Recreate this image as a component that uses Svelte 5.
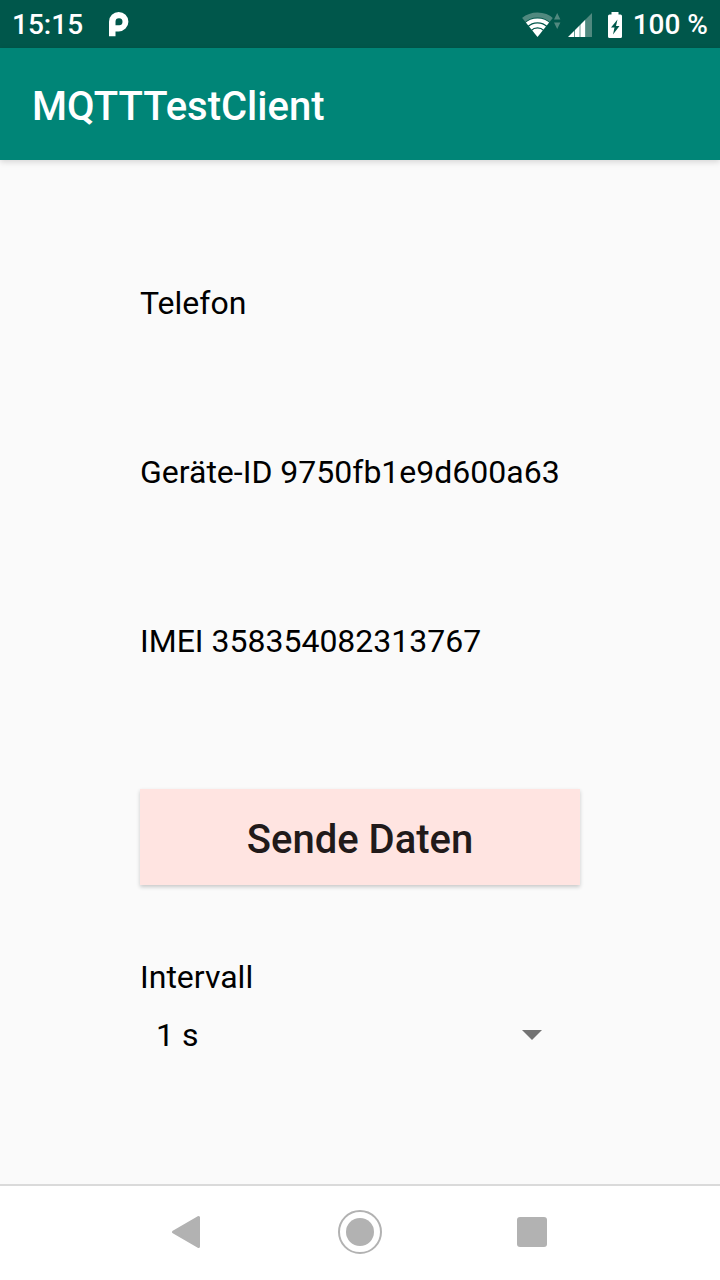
<script>
  const appName = 'MQTTTestClient';

  const infos = [
    { label: 'Telefon', value: '' },
    { label: 'Geräte-ID', value: '9750fb1e9d600a63' },
    { label: 'IMEI', value: '358354082313767' }
  ];

  const intervals = [1, 2, 5, 10, 30, 60];

  let interval = $state(1);
  let sent = $state(0);

  function sendData() {
    sent += 1;
  }
</script>

<div class="screen">
  <div class="statusbar">
    <span class="time">15:15</span>
    <svg class="parking" width="20" height="26" viewBox="0 0 20 26" aria-hidden="true">
      <path fill="#fff" fill-rule="evenodd" d="M0 24.300V9.700A9.700 9.700 0 0 1 9.700 0a9.700 9.700 0 0 1 0 19.400H6.500v4.900zM6.500 13.200h3.200a3.500 3.500 0 1 0-3.200-3.500z" />
    </svg>

    <div class="system">
      <svg width="40" height="26" viewBox="0 0 40 26" aria-hidden="true">
        <clipPath id="cone"><path d="M15.500 25L-1 4.500V-2h33v6.500z" /></clipPath>
        <g clip-path="url(#cone)" fill="none">
          <circle cx="15.500" cy="25" r="22" stroke="#50897f" stroke-width="5" />
          <circle cx="15.500" cy="25" r="16.700" stroke="#fff" stroke-width="3.800" />
          <circle cx="15.500" cy="25" r="11.600" stroke="#fff" stroke-width="3.800" />
          <circle cx="15.500" cy="25" r="4.200" stroke="#fff" stroke-width="8.400" />
        </g>
        <path fill="#50897f" d="M32 7.500L35.200 1l3.200 6.500zM32 10.500h6.400L35.200 17z" />
      </svg>
      <svg class="signal" width="24" height="26" viewBox="0 0 24 26" aria-hidden="true">
        <path fill="#50897f" d="M18 7l6-6v24h-6z" />
        <path fill="#fff" d="M0 25l18-18v18z" />
        <path stroke="#00574b" stroke-opacity=".6" d="M6.500 17v8M12 12v13M17.500 6v19" />
      </svg>
      <svg class="battery" width="14" height="26" viewBox="0 0 14 26" aria-hidden="true">
        <path fill="#fff" d="M3.500 0h7v2.500h2Q14 2.500 14 4v20.500q0 1.500-1.500 1.500h-11Q0 26 0 24.500V4q0-1.500 1.500-1.500h2z" />
        <path fill="#00574b" d="M9.500 7.500L3 15.500h3.500L5 22.500l6.500-8.500H8z" />
      </svg>
      <span>100 %</span>
    </div>
  </div>

  <header class="appbar">
    <h1>{appName}</h1>
  </header>

  <main>
    <div class="infos">
      {#each infos as info}
        <p>{info.label} {info.value}</p>
      {/each}
    </div>

    <button class="send" onclick={sendData}>Sende Daten</button>

    <div class="interval">
      <label for="interval">Intervall</label>
      <div class="spinner">
        <select id="interval" bind:value={interval}>
          {#each intervals as seconds}
            <option value={seconds}>{seconds} s</option>
          {/each}
        </select>
        <svg width="20" height="10" viewBox="0 0 20 10" aria-hidden="true">
          <path fill="#737373" d="M0 0h20L10 10z" />
        </svg>
      </div>
    </div>
  </main>

  <nav>
    <button aria-label="Zurück">
      <svg width="44" height="44" viewBox="0 0 44 44">
        <path fill="#b2b2b2" stroke="#b2b2b2" stroke-width="3" stroke-linejoin="round" d="M7.500 22l25-14.500v29z" />
      </svg>
    </button>
    <button aria-label="Startseite">
      <svg width="44" height="44" viewBox="0 0 44 44">
        <circle cx="22" cy="22" r="21" fill="none" stroke="#b2b2b2" stroke-width="2" />
        <circle cx="22" cy="22" r="14" fill="#b2b2b2" />
      </svg>
    </button>
    <button aria-label="Übersicht">
      <svg width="44" height="44" viewBox="0 0 44 44">
        <rect x="7" y="7" width="30" height="30" rx="3" fill="#b2b2b2" />
      </svg>
    </button>
  </nav>
</div>

<style>
  :global(body) {
    margin: 0;
    background: #fafafa;
  }

  .screen {
    display: flex;
    flex-direction: column;
    min-height: 100vh;
    font-family: Roboto, sans-serif;
    font-size: 32px;
    line-height: 40px;
    color: #000;
  }

  .statusbar {
    box-sizing: border-box;
    display: flex;
    align-items: center;
    height: 48px;
    padding: 2px 12px 0;
    background: #00574b;
    color: #fff;
    font-size: 28px;
    font-weight: 500;
  }

  .parking {
    margin-left: 26px;
  }

  .system {
    display: flex;
    align-items: center;
    margin-left: auto;
  }

  .signal {
    margin-left: 6px;
  }

  .battery {
    margin: 0 11px 0 16px;
  }

  .appbar {
    box-sizing: border-box;
    display: flex;
    align-items: center;
    height: 112px;
    padding: 6px 32px 0;
    background: #008577;
    color: #fff;
    box-shadow: 0 2px 6px rgba(0, 0, 0, 0.15);
  }

  h1 {
    margin: 0;
    font-size: 40px;
    font-weight: 500;
    line-height: 48px;
  }

  main {
    flex: 1;
    display: flex;
    flex-direction: column;
    padding: 123px 140px 0;
  }

  .infos {
    display: flex;
    flex-direction: column;
    gap: 129px;
  }

  .infos p {
    margin: 0;
  }

  .send {
    height: 96px;
    margin-top: 128px;
    padding: 4px 0 0;
    border: 0;
    background: #ffe4e1;
    color: #211a1a;
    font-family: inherit;
    font-size: 40px;
    font-weight: 500;
    box-shadow: 0 2px 4px rgba(0, 0, 0, 0.2);
    cursor: pointer;
  }

  .interval {
    display: flex;
    flex-direction: column;
    margin-top: 72px;
  }

  .spinner {
    display: grid;
    align-items: center;
    margin-top: 14px;
  }

  .spinner select,
  .spinner svg {
    grid-area: 1 / 1;
  }

  .spinner svg {
    justify-self: end;
    margin-right: 38px;
    pointer-events: none;
  }

  select {
    appearance: none;
    width: 100%;
    height: 48px;
    padding: 0 64px 0 16px;
    border: 0;
    background: none;
    color: inherit;
    font-family: inherit;
    font-size: 32px;
  }

  nav {
    display: flex;
    justify-content: center;
    gap: 128px;
    padding: 24px 0 26px;
    border-top: 2px solid #dadada;
    background: #fff;
  }

  nav button {
    display: flex;
    padding: 0;
    border: 0;
    background: none;
    cursor: pointer;
  }
</style>
